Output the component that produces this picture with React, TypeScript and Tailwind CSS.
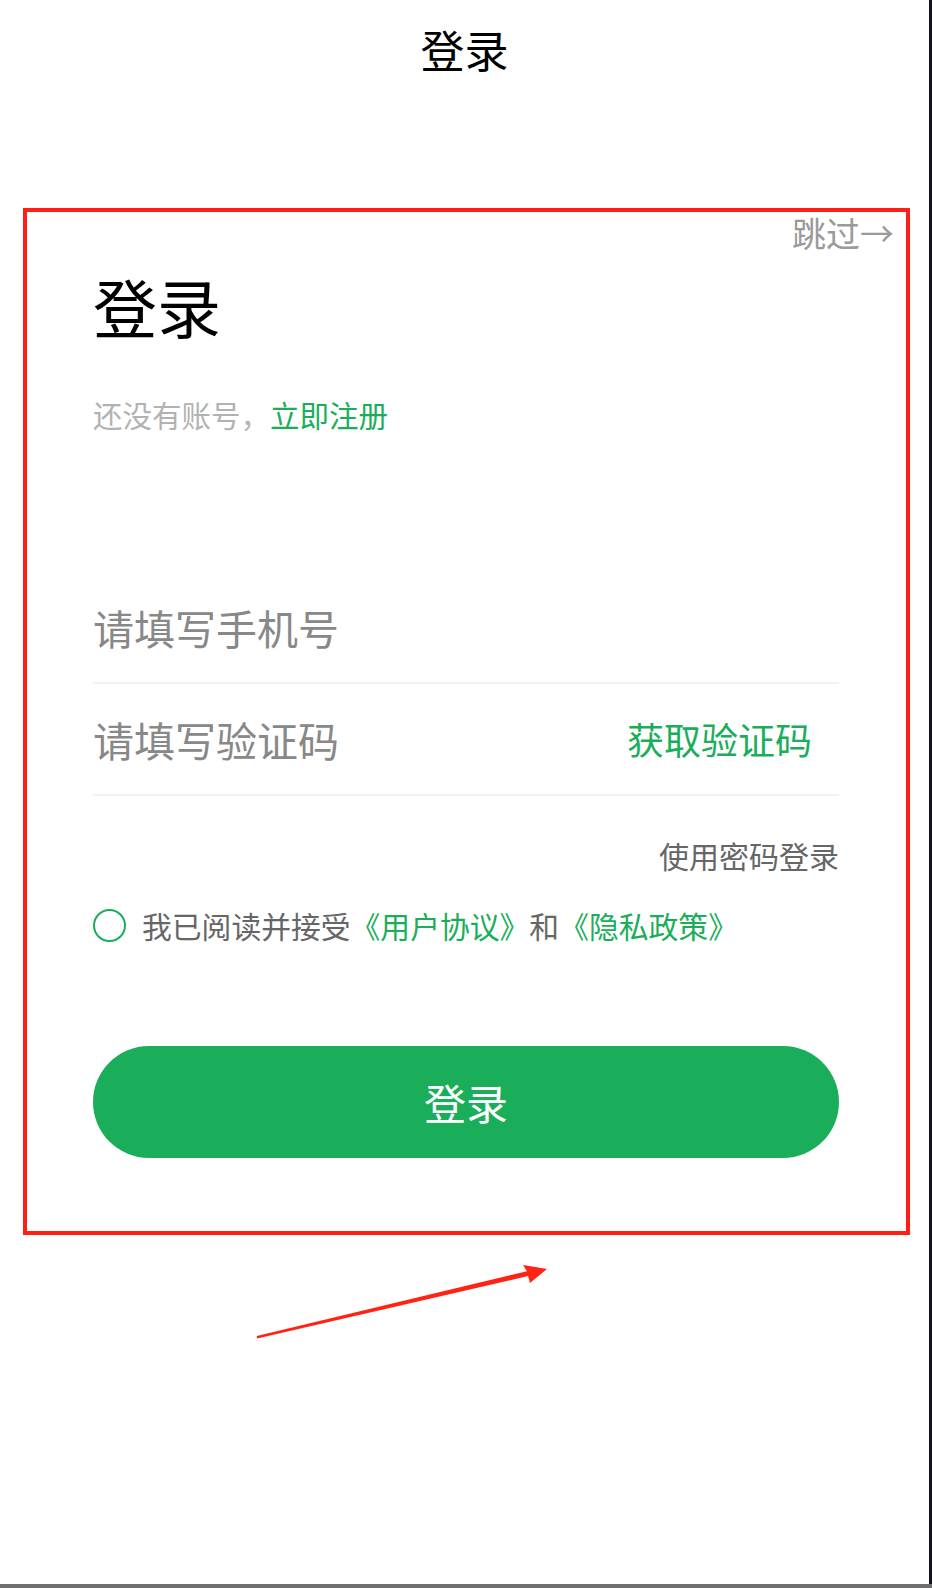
import { useState } from 'react';

const green = 'text-[#1bae5a]';

export default function App() {
  const [agreed, setAgreed] = useState(false);

  return (
    <div className="flex h-[1588px] w-[932px] flex-col overflow-hidden bg-white font-['Noto_Sans_CJK_SC','Noto_Sans',sans-serif]">
      <div className="flex h-[1584px]">
        <div className="relative flex-1">
          <header className="flex h-[98px] items-center justify-center text-[44px] leading-none text-black">登录</header>

          <div className="ml-[23px] mt-[110px] w-[887px] border-4 border-[#ff1f14]">
            <div className="flex justify-end pr-[12px] pt-[4px]">
              <span className="text-[34px] leading-[34px] text-[#9a9a9a]">跳过→</span>
            </div>

            <div className="pb-[73px] pl-[66px] pr-[67px]">
              <h1 className="mt-[23px] text-[64px] leading-[64px] text-black">登录</h1>
              <p className="mt-[62px] text-[29.5px] leading-[30px] text-[#b2b2b2]">
                还没有账号，<span className={green}>立即注册</span>
              </p>

              <div className="mt-[143px] flex h-[112px] items-center border-b-2 border-[#f2f2f2]">
                <span className="text-[41px] leading-none text-[#888]">请填写手机号</span>
              </div>
              <div className="flex h-[112px] items-center justify-between border-b-2 border-[#f2f2f2]">
                <span className="text-[41px] leading-none text-[#888]">请填写验证码</span>
                <span className={`pr-[27px] text-[37px] leading-none ${green}`}>获取验证码</span>
              </div>

              <div className="mt-[44px] flex justify-end">
                <span className="text-[30px] leading-[30px] text-[#666]">使用密码登录</span>
              </div>

              <div className="mt-[39px] flex h-[33px] items-center gap-[16px]">
                <button
                  onClick={() => setAgreed((v) => !v)}
                  className="h-[33px] w-[33px] shrink-0 rounded-full border-2 border-[#1bae5a]"
                  aria-label="agree"
                >
                  {agreed && <span className="m-auto block h-[17px] w-[17px] rounded-full bg-[#1bae5a]" />}
                </button>
                <span className="text-[29.8px] leading-none text-[#666]">
                  我已阅读并接受<span className={green}>《用户协议》</span>和<span className={green}>《隐私政策》</span>
                </span>
              </div>

              <button className="mt-[104px] flex h-[112px] w-full items-center justify-center rounded-full bg-[#1bae5a] text-[42px] leading-none text-white">
                登录
              </button>
            </div>
          </div>

          {/* annotation arrow */}
          <svg className="absolute left-[250px] top-[1260px]" width="305" height="85" viewBox="0 0 305 85">
            <polygon
              points="6.8,76 276.9,11.2 273,5 297,9 280,23 278.1,16 7.2,78.5"
              fill="#ff2314"
            />
          </svg>
        </div>
        <div className="w-[3px] bg-[#15131f]" />
      </div>
      <div className="h-[4px] bg-[#6e6e6e]" />
    </div>
  );
}
